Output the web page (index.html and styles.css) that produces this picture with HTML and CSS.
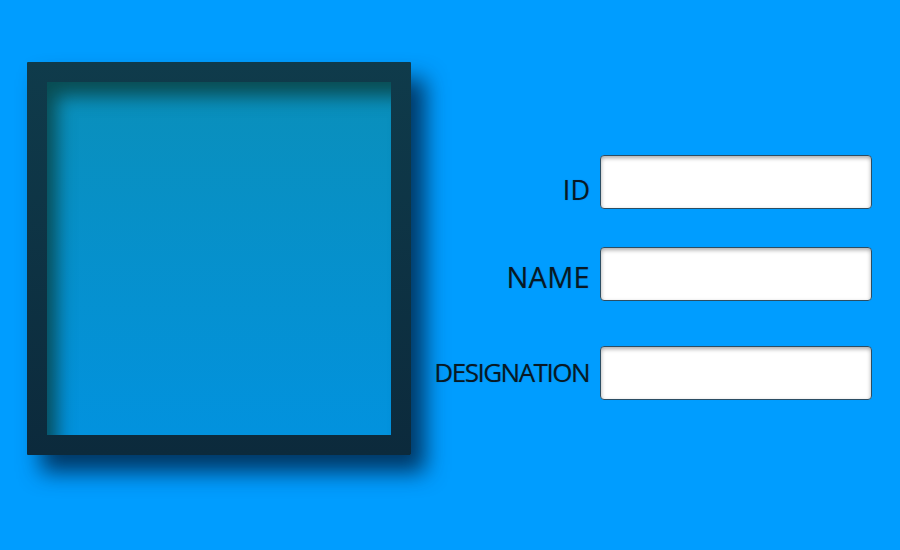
FILE: index.html
```
<!DOCTYPE html>
<html>
<head>
<meta charset="utf-8">
<link rel="stylesheet" href="styles.css">
</head>
<body>
<div class="page">
  <div class="frame">
    <div class="pane"></div>
  </div>
  <div class="form">
    <label class="lbl lbl-id">ID</label>
    <div class="box"></div>
    <label class="lbl lbl-name">NAME</label>
    <div class="box"></div>
    <label class="lbl lbl-des">DESIGNATION</label>
    <div class="box box-des"></div>
  </div>
</div>
</body>
</html>
```
FILE: styles.css
```
html, body {
  margin: 0;
  padding: 0;
  background: #009dff;
}
.page {
  width: 900px;
  height: 550px;
  display: flex;
  align-items: flex-start;
  font-family: "Open Sans", "Noto Sans", sans-serif;
}
.frame {
  margin: 62px 0 0 27px;
  width: 384px;
  height: 393px;
  box-sizing: border-box;
  padding: 20px;
  background: linear-gradient(#0f3b4b, #0c2a3c);
  border-radius: 1px;
  box-shadow: 14px 17px 22px rgba(0, 30, 62, 0.8);
}
.pane {
  width: 100%;
  height: 100%;
  background: linear-gradient(#0a8fba, #0292de);
  box-shadow: inset 14px 18px 18px -4px rgba(10, 55, 50, 0.75);
}
.form {
  margin: 155px 0 0 0;
  flex: 1;
  display: grid;
  grid-template-columns: auto 272px;
  grid-template-rows: 54px 54px 54px;
  row-gap: 38px;
  column-gap: 10px;
  justify-content: end;
  padding-right: 28px;
}
.box-des {
  margin-top: 7px;
}
.lbl {
  font-size: 27px;
  color: #081924;
  text-align: right;
  align-self: end;
  line-height: 1;
  text-shadow: 0 0 1px rgba(0, 20, 40, 0.4);
}
.lbl-id { padding-bottom: 6px; }
.lbl-name { font-size: 29px; padding-bottom: 10px; letter-spacing: 0.3px; }
.lbl-des { font-size: 26px; padding-bottom: 8px; margin-top: 7px; letter-spacing: -1.5px; margin-right: 1px; }
.box {
  box-sizing: border-box;
  height: 54px;
  background: #fff;
  border: 1px solid #2b4d63;
  border-radius: 4px;
  box-shadow: inset 0 2px 4px rgba(0, 0, 0, 0.35);
}
```
